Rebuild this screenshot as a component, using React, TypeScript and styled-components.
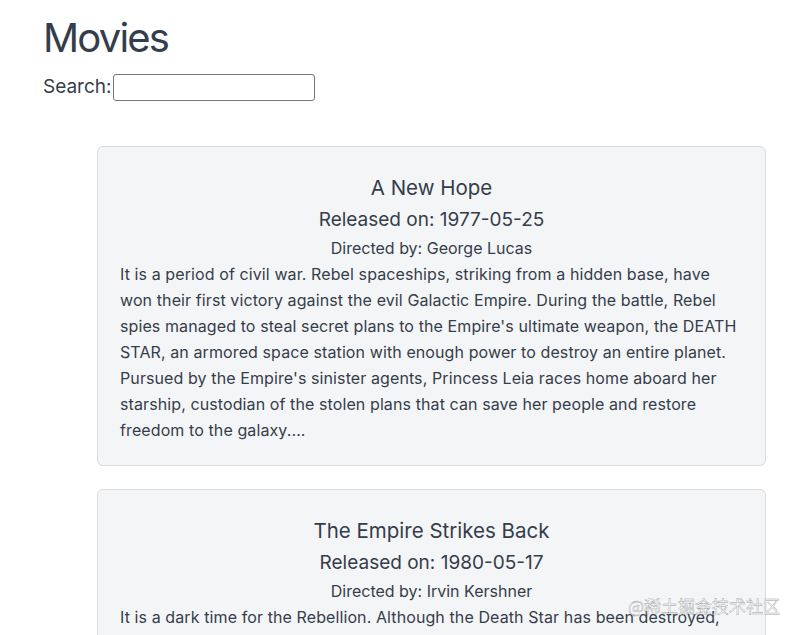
import React, { useState } from "react";
import styled, { createGlobalStyle } from "styled-components";

const GlobalStyle = createGlobalStyle`
  body {
    margin: 0;
    background: #fff;
    font-family: Inter, "Noto Sans", "Liberation Sans", sans-serif;
    color: #343d4b;
  }
`;

const Page = styled.div`
  position: relative;
  width: 800px;
  height: 635px;
  overflow: hidden;
  padding: 14px 34px 0 43px;
  box-sizing: border-box;
`;

const Title = styled.h1`
  margin: 0 0 11px;
  font-size: 40px;
  font-weight: 400;
  line-height: 48px;
  letter-spacing: -1.8px;
`;

const SearchRow = styled.label`
  display: flex;
  align-items: center;
  font-size: 19px;
  line-height: 28px;
`;

const SearchInput = styled.input`
  width: 202px;
  height: 27px;
  box-sizing: border-box;
  border: 1px solid #767676;
  border-radius: 3px;
  padding: 1px 4px;
  margin-left: 1px;
  font: inherit;
  font-size: 14px;
`;

const MovieList = styled.div`
  display: flex;
  flex-direction: column;
  gap: 23px;
  margin: 45px 0 0 54px;
`;

const Card = styled.div`
  background: #f4f5f6;
  border: 1px solid #dadbdd;
  border-radius: 6px;
  padding: 26px 22px 22px;
`;

const CardHeading = styled.div<{ size: number; gap: number }>`
  text-align: center;
  font-size: ${(p) => p.size}px;
  line-height: ${(p) => Math.round(p.size * 1.45)}px;
  margin-bottom: ${(p) => p.gap}px;
`;

const Director = styled.div`
  text-align: center;
  font-size: 16px;
  line-height: 22px;
  margin-bottom: 2px;
`;

const Crawl = styled.p`
  margin: 0;
  font-size: 16px;
  line-height: 26px;
  letter-spacing: 0.1px;
`;

const Watermark = styled.div`
  position: absolute;
  right: 20px;
  bottom: 17px;
  font-size: 17px;
  color: rgba(255, 255, 255, 0.9);
  -webkit-text-stroke: 0.4px rgba(110, 110, 110, 0.7);
  font-family: "Noto Sans CJK SC", sans-serif;
`;

const movies = [
  {
    title: "A New Hope",
    release: "1977-05-25",
    director: "George Lucas",
    crawl:
      "It is a period of civil war. Rebel spaceships, striking from a hidden base, have won their first victory against the evil Galactic Empire. During the battle, Rebel spies managed to steal secret plans to the Empire's ultimate weapon, the DEATH STAR, an armored space station with enough power to destroy an entire planet. Pursued by the Empire's sinister agents, Princess Leia races home aboard her starship, custodian of the stolen plans that can save her people and restore freedom to the galaxy....",
  },
  {
    title: "The Empire Strikes Back",
    release: "1980-05-17",
    director: "Irvin Kershner",
    crawl:
      "It is a dark time for the Rebellion. Although the Death Star has been destroyed, Imperial troops have driven the Rebel forces from their hidden base and pursued them across the galaxy. Evading the dreaded Imperial Starfleet, a group of freedom fighters led by Luke Skywalker has established a new secret base on the remote ice world of Hoth....",
  },
];

export default function App() {
  const [query, setQuery] = useState("");
  const shown = movies.filter((m) =>
    m.title.toLowerCase().includes(query.toLowerCase())
  );

  return (
    <Page>
      <GlobalStyle />
      <Title>Movies</Title>
      <SearchRow>
        Search:
        <SearchInput value={query} onChange={(e) => setQuery(e.target.value)} />
      </SearchRow>
      <MovieList>
        {shown.map((m) => (
          <Card key={m.title}>
            <CardHeading size={20.5} gap={3}>{m.title}</CardHeading>
            <CardHeading size={19} gap={3}>Released on: {m.release}</CardHeading>
            <Director>Directed by: {m.director}</Director>
            <Crawl>{m.crawl}</Crawl>
          </Card>
        ))}
      </MovieList>
      <Watermark>@稀土掘金技术社区</Watermark>
    </Page>
  );
}
